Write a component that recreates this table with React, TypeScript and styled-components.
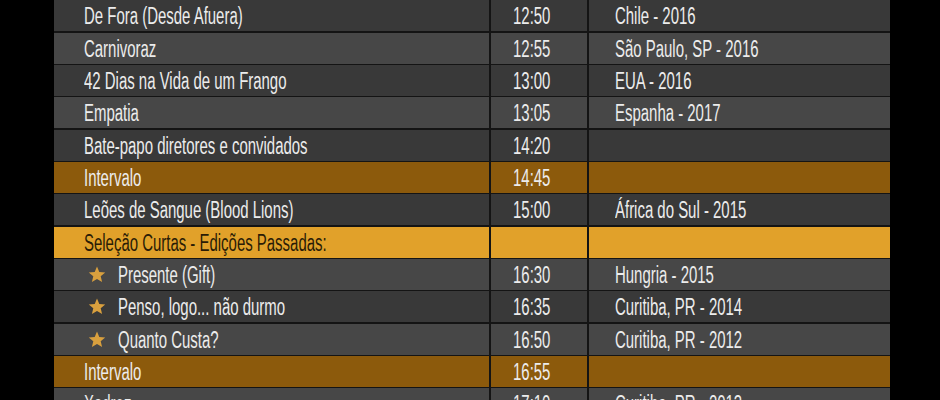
import styled, { createGlobalStyle } from 'styled-components';

const GlobalStyle = createGlobalStyle`
  html, body {
    margin: 0;
    padding: 0;
    background: #000;
  }
  body {
    font-family: "Liberation Sans Narrow", "Liberation Sans", Arial, sans-serif;
  }
`;

type Kind = 'dark' | 'light' | 'break' | 'section';

const rowColors: Record<Kind, string> = {
  dark: '#393939',
  light: '#474747',
  break: '#8c5a0c',
  section: '#e1a12a',
};

const Page = styled.div`
  width: 940px;
  height: 400px;
  overflow: hidden;
  padding-left: 54px;
  box-sizing: border-box;
`;

const Schedule = styled.div`
  width: 836px;
  margin-top: 0.4px;
  display: flex;
  flex-direction: column;
  gap: 1.5px;
  background: #141414;
`;

const Row = styled.div<{ $kind: Kind }>`
  display: grid;
  grid-template-columns: 435px 96px 1fr;
  column-gap: 2px;
  height: 30.83px;
  flex: none;
  background: #141414;
  color: ${p => (p.$kind === 'section' ? '#2a1c06' : '#ececec')};

  & > div {
    background: ${p => rowColors[p.$kind]};
  }
`;

const Cell = styled.div<{ $pad: number }>`
  display: flex;
  align-items: center;
  padding-left: ${p => p.$pad}px;
  padding-top: 2px;
  box-sizing: border-box;
  overflow: hidden;
  white-space: nowrap;
`;

const Label = styled.span`
  display: inline-block;
  font-size: 23px;
  line-height: 1;
  transform: scaleX(0.65);
  transform-origin: left center;
`;

const Star = styled.svg`
  width: 18px;
  height: 17px;
  margin: -2px 12px 0 4px;
  flex: none;
`;

const StarIcon = () => (
  <Star viewBox="0 0 24 23">
    <path
      d="M12 0.8l3.1 7.4 8 0.6-6.1 5.2 1.9 7.8L12 17.6l-6.9 4.2 1.9-7.8L0.9 8.8l8-0.6z"
      fill="#d9a03e"
    />
  </Star>
);

type Item = { title: string; time: string; place: string; kind: Kind; star?: boolean };

const items: Item[] = [
  { title: 'De Fora (Desde Afuera)', time: '12:50', place: 'Chile - 2016', kind: 'dark' },
  { title: 'Carnivoraz', time: '12:55', place: 'São Paulo, SP - 2016', kind: 'light' },
  { title: '42 Dias na Vida de um Frango', time: '13:00', place: 'EUA - 2016', kind: 'dark' },
  { title: 'Empatia', time: '13:05', place: 'Espanha - 2017', kind: 'light' },
  { title: 'Bate-papo diretores e convidados', time: '14:20', place: '', kind: 'dark' },
  { title: 'Intervalo', time: '14:45', place: '', kind: 'break' },
  { title: 'Leões de Sangue (Blood Lions)', time: '15:00', place: 'África do Sul - 2015', kind: 'dark' },
  { title: 'Seleção Curtas - Edições Passadas:', time: '', place: '', kind: 'section' },
  { title: 'Presente (Gift)', time: '16:30', place: 'Hungria - 2015', kind: 'light', star: true },
  { title: 'Penso, logo... não durmo', time: '16:35', place: 'Curitiba, PR - 2014', kind: 'dark', star: true },
  { title: 'Quanto Custa?', time: '16:50', place: 'Curitiba, PR - 2012', kind: 'light', star: true },
  { title: 'Intervalo', time: '16:55', place: '', kind: 'break' },
  { title: 'Xadrez', time: '17:10', place: 'Curitiba, PR - 2013', kind: 'light' },
];

export default function App() {
  return (
    <Page>
      <GlobalStyle />
      <Schedule>
        {items.map((it, i) => (
          <Row key={i} $kind={it.kind}>
            <Cell $pad={30}>
              {it.star && <StarIcon />}
              <Label>{it.title}</Label>
            </Cell>
            <Cell $pad={22}>
              <Label>{it.time}</Label>
            </Cell>
            <Cell $pad={26}>
              <Label>{it.place}</Label>
            </Cell>
          </Row>
        ))}
      </Schedule>
    </Page>
  );
}
